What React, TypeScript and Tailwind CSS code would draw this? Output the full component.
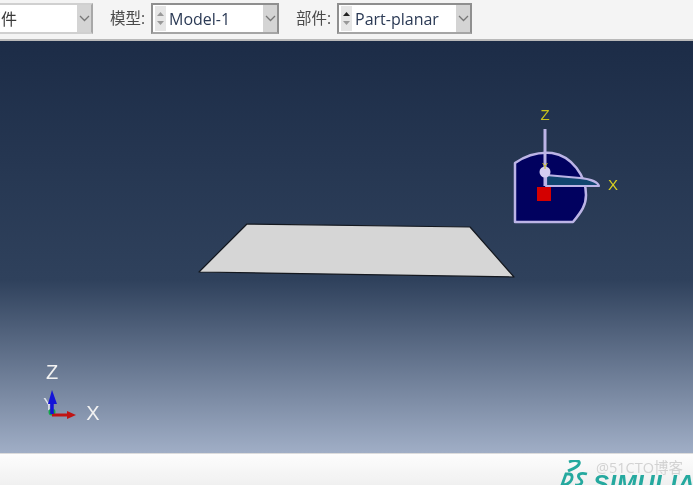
const FONT = "font-['Open_Sans','Noto_Sans_CJK_SC',sans-serif]";

function Spinner({ dark }: { dark?: boolean }) {
  return (
    <div className="flex h-[25px] w-[11px] shrink-0 flex-col items-center justify-center gap-[5px] bg-[#e6e6e6]">
      <svg width="7" height="4" viewBox="0 0 7 4">
        <path d="M3.5 0 7 4H0z" fill={dark ? '#222' : '#999'} />
      </svg>
      <svg width="7" height="4" viewBox="0 0 7 4">
        <path d="M0 0h7L3.5 4z" fill="#999" />
      </svg>
    </div>
  );
}

function ComboArrow() {
  return (
    <div className="flex h-full w-[14px] shrink-0 items-center justify-center bg-[#d4d4d4]">
      <svg width="11" height="7" viewBox="0 0 11 7" fill="none">
        <path d="M1 1l4.5 4.5L10 1" stroke="#777" strokeWidth="1.3" />
      </svg>
    </div>
  );
}

function Combo({ text, width, spinnerDark, className }: { text: string; width: string; spinnerDark?: boolean; className?: string }) {
  return (
    <div className={`flex h-[31px] shrink-0 items-center border-2 border-[#8f8f8f] border-b-[#a5a5a5] bg-white pl-[2px] ${width} ${className ?? ''}`}>
      <Spinner dark={spinnerDark} />
      <span className="ml-[3px] min-w-0 flex-1 text-[16px] leading-none text-[#2b3a55]">{text}</span>
      <ComboArrow />
    </div>
  );
}

function Label({ text }: { text: string }) {
  return <span className="block w-[38px] text-[15.5px] leading-none whitespace-nowrap text-[#4a4a4a]">{text}</span>;
}

function Toolbar() {
  return (
    <div className="flex h-[41px] shrink-0 items-center overflow-hidden border-b-2 border-[#b9b9b9] bg-[#f4f4f4] pb-[2px]">
      <div className="ml-[-30px] flex h-[31px] w-[123px] shrink-0 items-center border-2 border-r-[#a8a8a8] border-[#d0d0d0] bg-white">
        <span className="ml-[13px] flex-1 text-[16px] leading-none text-[#3a3a3a]">部件</span>
        <ComboArrow />
      </div>
      <div className="ml-[17px]"><Label text="模型:" /></div>
      <Combo text="Model-1" width="w-[128px]" className="ml-[3px]" />
      <div className="ml-[17px]"><Label text="部件:" /></div>
      <Combo text="Part-planar" width="w-[135px]" spinnerDark className="ml-[3px]" />
    </div>
  );
}

function Scene() {
  return (
    <svg className="absolute inset-0" width="693" height="412" viewBox="0 41 693 412">
      {/* planar part */}
      <path d="M199 272 247 224 470 227 514 277Z" fill="#d6d6d6" stroke="#14181f" strokeWidth="1.2" strokeLinejoin="round" />

      {/* view manipulator triad */}
      <path d="M515 163C528 154 540 152 552 153C572 156 586 176 586 195C586 205 582 211 573 222L515 222Z" fill="#01015f" stroke="#bcb4e6" strokeWidth="2.5" strokeLinejoin="round" />
      <path d="M546 175 580 178C590 179 598 182 599 186L546 186Z" fill="#11456f" stroke="#bcb4e6" strokeWidth="2.2" strokeLinejoin="round" />
      <path d="M545 129V186" stroke="#bcb4e6" strokeWidth="3" />
      <circle cx="545" cy="172" r="5.5" fill="#d4cdf0" />
      <rect x="537" y="187" width="14" height="14" fill="#d40000" />
      <text x="545" y="120" textAnchor="middle" fontFamily="Liberation Sans" fontSize="15" fill="#c9c21a">Z</text>
      <text x="613" y="190" textAnchor="middle" fontFamily="Liberation Sans" fontSize="15" fill="#d8d020">X</text>
      <text x="545" y="169" textAnchor="middle" fontFamily="Liberation Sans" fontSize="9" fill="#c9c21a">Y</text>

      {/* bottom-left axes */}
      <text x="52" y="379" textAnchor="middle" fontFamily="Liberation Sans" fontSize="20" fill="#f2f2f2">Z</text>
      <text x="93" y="420" textAnchor="middle" fontFamily="Liberation Sans" fontSize="20" fill="#f2f2f2">X</text>
      <text x="49" y="410" textAnchor="middle" fontFamily="Liberation Sans" fontSize="17" fill="#dfe3ec">Y</text>
      <circle cx="52" cy="412" r="3.5" fill="#12a84a" />
      <path d="M52 415H68" stroke="#c01414" strokeWidth="3" />
      <path d="M67 411 76 415 67 419Z" fill="#c01414" />
      <path d="M52 414V400" stroke="#1414d8" strokeWidth="3.5" />
      <path d="M48 404 52 390 57 404Z" fill="#1414d8" />
    </svg>
  );
}

function Viewport() {
  return (
    <div className="relative h-[412px] shrink-0 overflow-hidden bg-[linear-gradient(180deg,#1c2c47_0%,#2f415c_58%,#a0aec6_100%)]">
      <Scene />
    </div>
  );
}

function Footer() {
  return (
    <div className="relative flex h-[32px] shrink-0 overflow-hidden border-t border-[#dcdcdc] bg-[linear-gradient(180deg,#fdfdfd,#f0f0f0)] pl-[560px]">
      <svg className="mt-[6px] shrink-0" width="30" height="27" viewBox="0 0 30 27" fill="none" stroke="#25a99f" strokeWidth="2.8">
        <path d="M9 2C14 0 21 0 19 4C17 8 12 9 8 11" />
        <path d="M2 25 6 14H9C13 14 13 19 10 22C8 24 5 25 2 25Z" />
        <path d="M27 14C20 12 16 15 20 19C24 22 21 26 15 25" />
      </svg>
      <span className="mt-[18px] ml-[3px] text-[24px] leading-none font-bold tracking-[0.5px] whitespace-nowrap text-[#25a99f] italic font-['Liberation_Sans',sans-serif]">SIMULIA</span>
      <span className="absolute top-[7px] left-[596px] text-[14.5px] leading-none whitespace-nowrap text-[#d2d2d2]">@51CTO博客</span>
    </div>
  );
}

export default function App() {
  return (
    <div className={`flex h-[485px] w-[693px] flex-col overflow-hidden blur-[0.4px] ${FONT}`}>
      <Toolbar />
      <Viewport />
      <Footer />
    </div>
  );
}
